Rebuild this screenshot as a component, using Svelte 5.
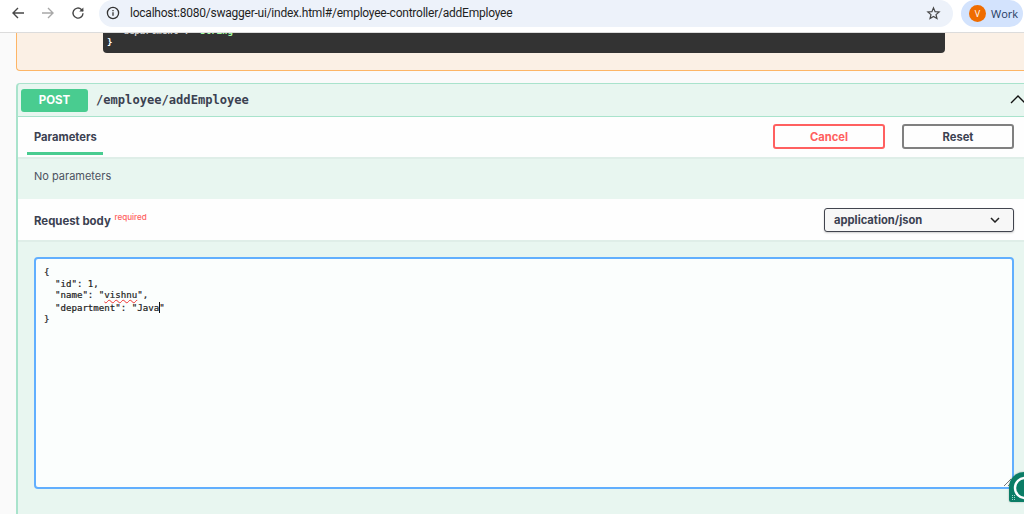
<script>
  let path = "/employee/addEmployee";
  let url = "localhost:8080/swagger-ui/index.html#/employee-controller/addEmployee";
</script>

<div class="screen">
  <header class="chrome">
    <button class="nav" aria-label="Back">
      <svg viewBox="0 0 16 16" width="16" height="16"><path d="M14 8H3M8 3 3 8l5 5" fill="none" stroke="#474747" stroke-width="1.4"/></svg>
    </button>
    <button class="nav" aria-label="Forward">
      <svg viewBox="0 0 16 16" width="16" height="16"><path d="M2 8h11M8 3l5 5-5 5" fill="none" stroke="#a8a8a8" stroke-width="1.4"/></svg>
    </button>
    <button class="nav" aria-label="Reload">
      <svg viewBox="0 0 16 16" width="16" height="16"><path d="M13 8.2A5 5 0 1 1 11.4 4.4L13 6" fill="none" stroke="#474747" stroke-width="1.4"/><path d="M13.4 2.4v4.2H9.2z" fill="#474747"/></svg>
    </button>
    <div class="omnibox">
      <svg class="info" viewBox="0 0 14 14" width="14" height="14"><circle cx="7" cy="7" r="5.6" fill="none" stroke="#333" stroke-width="1.3"/><path d="M7 6.2v3.6M7 4.1v1.2" stroke="#333" stroke-width="1.3"/></svg>
      <span class="url">{url}</span>
      <svg class="star" viewBox="0 0 16 16" width="15" height="15"><path d="M8 2l1.7 4 4.3.4-3.3 2.8 1 4.2L8 11.2l-3.7 2.2 1-4.2L2 6.4 6.3 6z" fill="none" stroke="#474747" stroke-width="1.3"/></svg>
    </div>
    <div class="profile">
      <span class="avatar">V</span>
      <span class="work">Work</span>
    </div>
  </header>

  <main class="page">
    <section class="opblock-put">
      <div class="code-tail">
        <div class="code-clip">&nbsp;&nbsp;"department": <span class="str">"string"</span></div>
        <div>{"}"}</div>
      </div>
    </section>

    <section class="opblock">
      <div class="summary">
        <span class="method">POST</span>
        <span class="path">{path}</span>
        <svg class="caret" viewBox="0 0 16 10" width="16" height="10"><path d="M1 9l7-7 7 7" fill="none" stroke="#111" stroke-width="1.4"/></svg>
      </div>

      <div class="tabs">
        <div class="tab">Parameters</div>
        <div class="actions">
          <button class="btn cancel">Cancel</button>
          <button class="btn reset">Reset</button>
        </div>
      </div>

      <div class="no-params">No parameters</div>

      <div class="body-head">
        <div class="body-title">Request body <sup>required</sup></div>
        <div class="select">
          <span>application/json</span>
          <svg viewBox="0 0 10 6" width="10" height="6"><path d="M1 1l4 4 4-4" fill="none" stroke="#222" stroke-width="1.5"/></svg>
        </div>
      </div>

      <div class="editor-wrap">
        <div class="editor">
          <pre>{"{"}
  "id": 1,
  "name": "<span class="typo">vishnu</span>",
  "department": "Java<span class="cursor"></span>"
{"}"}</pre>
          <svg class="handle" viewBox="0 0 9 9" width="9" height="9"><path d="M1 8l7-7M5 8l3-3" stroke="#777" stroke-width="1"/></svg>
        </div>
      </div>
    </section>
  </main>

  <div class="badge">
    <svg viewBox="0 0 30 30" width="30" height="30">
      <path d="M15 0h15v30H2a2 2 0 0 1-2-2V15A15 15 0 0 1 15 0z" fill="#0b7d66"/>
      <circle cx="16" cy="16" r="10" fill="none" stroke="#fff" stroke-width="2.4"/>
      <path d="M3 23h1v1H3zM5 23h1v1H5zM3 25h1v1H3zM5 25h1v1H5zM3 27h1v1H3zM5 27h1v1H5z" fill="#9fd8c8"/>
    </svg>
  </div>
</div>

<style>
  :global(body) {
    margin: 0;
    background: #fafafa;
  }

  .screen {
    position: relative;
    width: 1024px;
    height: 514px;
    overflow: hidden;
    background: #fafafa;
    font-family: "Inter", "Liberation Sans", sans-serif;
    color: #3b4151;
  }

  .chrome {
    display: flex;
    align-items: center;
    height: 33px;
    box-sizing: border-box;
    padding: 0 1px 6px 10px;
    background: #fff;
    border-bottom: 1px solid #dcdcdc;
  }

  .nav {
    display: flex;
    width: 16px;
    height: 16px;
    margin-right: 14px;
    padding: 0;
    border: 0;
    background: none;
  }

  .omnibox {
    display: flex;
    align-items: center;
    flex: 1;
    height: 27px;
    margin-left: -1px;
    padding: 0 12px 0 7px;
    background: #edf2fa;
    border-radius: 14px;
  }

  .url {
    flex: 1;
    margin-left: 10px;
    font: 12px "Roboto", sans-serif;
    letter-spacing: -0.23px;
    color: #1f1f1f;
    white-space: nowrap;
  }

  .profile {
    display: flex;
    align-items: center;
    gap: 5px;
    width: 62px;
    height: 27px;
    box-sizing: border-box;
    margin-left: 8px;
    padding-left: 8px;
    background: #d3e3fd;
    border-radius: 14px;
  }

  .avatar {
    display: grid;
    place-items: center;
    width: 17px;
    height: 17px;
    border-radius: 50%;
    background: #ef6c00;
    color: #fff;
    font: 9px "Open Sans", sans-serif;
  }

  .work {
    font: 11px "Open Sans", sans-serif;
    color: #1f3a5f;
  }

  .page {
    padding-left: 16px;
  }

  .opblock-put {
    height: 38px;
    box-sizing: border-box;
    background: #fbf0e5;
    border: solid #fdb566;
    border-width: 0 0 1px 1px;
    border-bottom-left-radius: 4px;
  }

  .code-tail {
    width: 842px;
    height: 20px;
    box-sizing: border-box;
    margin-left: 86px;
    padding: 0 0 5px 4px;
    overflow: hidden;
    background: #333;
    border-radius: 0 0 4px 4px;
    color: #fff;
    font: bold 9.1px/11px "DejaVu Sans Mono", monospace;
    display: flex;
    flex-direction: column;
    justify-content: flex-end;
  }

  .code-clip {
    flex: none;
    white-space: pre;
    color: #ccc;
  }

  .str {
    color: #a2fca2;
  }

  .opblock {
    margin-top: 12px;
    height: 440px;
    background: #e8f6f0;
    border: solid #a9e3cc;
    border-width: 1px 0 0 2px;
    border-radius: 4px 0 0 4px;
  }

  .summary {
    display: flex;
    align-items: center;
    height: 32px;
    padding-left: 3px;
    border-bottom: 1px solid #a9e3cc;
  }

  .method {
    width: 67px;
    height: 23px;
    line-height: 23px;
    text-align: center;
    background: #49cc90;
    border-radius: 3px;
    color: #fff;
    font-size: 11.5px;
    font-weight: 700;
  }

  .path {
    margin-left: 8px;
    font: 700 12.1px "DejaVu Sans Mono", monospace;
    color: #3b4151;
  }

  .caret {
    position: absolute;
    left: 1010px;
    top: 94px;
  }

  .tabs {
    display: flex;
    justify-content: space-between;
    height: 40px;
    padding: 0 10px 0 9px;
    background: #fefefe;
    border-bottom: 2px solid #dfeee8;
  }

  .tab {
    width: 76px;
    height: 38px;
    box-sizing: border-box;
    padding: 13px 0 0 7px;
    border-bottom: 3px solid #49cc90;
    font-size: 11.2px;
    font-weight: 700;
  }

  .actions {
    display: flex;
    gap: 17px;
    padding-top: 7px;
  }

  .btn {
    width: 112px;
    height: 25px;
    padding: 0;
    background: transparent;
    border: 2px solid gray;
    border-radius: 3px;
    color: #3b4151;
    font: 700 11.2px "Inter", "Liberation Sans", sans-serif;
  }

  .btn.cancel {
    border-color: #ff6060;
    color: #ff6060;
  }

  .no-params {
    height: 40px;
    padding-left: 16px;
    line-height: 35px;
    font-size: 11px;
    color: #4c5260;
  }

  .body-head {
    display: flex;
    justify-content: space-between;
    align-items: center;
    height: 41px;
    padding: 0 10px 0 16px;
    background: #fefefe;
    border-bottom: 2px solid #dfeee8;
  }

  .body-title {
    padding-top: 2px;
    font-size: 11.4px;
    font-weight: 700;
  }

  sup {
    margin-left: 1px;
    color: #ff6060;
    font-size: 8.1px;
    font-weight: 500;
    vertical-align: super;
    line-height: 0;
  }

  .select {
    display: flex;
    align-items: center;
    justify-content: space-between;
    width: 190px;
    height: 24px;
    box-sizing: border-box;
    padding: 0 13px 0 9px;
    background: #f7f7f7;
    border: 1.5px solid #41444e;
    border-radius: 3px;
    box-shadow: 0 1px 2px rgba(0, 0, 0, 0.2);
    font-size: 11.2px;
    font-weight: 700;
  }

  .editor-wrap {
    padding: 15px 0 0 16px;
  }

  .editor {
    position: relative;
    width: 980px;
    height: 232px;
    box-sizing: border-box;
    padding: 8px 8px;
    background: #fbfefd;
    border: 2px solid #61affe;
    border-radius: 4px;
  }

  .handle {
    position: absolute;
    right: 0;
    bottom: 0;
  }

  pre {
    margin: 0;
    font: 400 9.12px/11.5px "DejaVu Sans Mono", monospace;
    color: #222;
    -webkit-text-stroke: 0.2px #222;
  }

  .typo {
    text-decoration: underline wavy #e33;
    text-decoration-thickness: 1px;
  }

  .cursor {
    display: inline-block;
    width: 1px;
    height: 11px;
    margin: 0 -1px -2px 0;
    background: #111;
  }

  .badge {
    position: absolute;
    left: 1009px;
    top: 472px;
    border-radius: 15px 0 0 2px;
    box-shadow: 0 0 2px rgba(0, 0, 0, 0.3);
    line-height: 0;
  }
</style>
